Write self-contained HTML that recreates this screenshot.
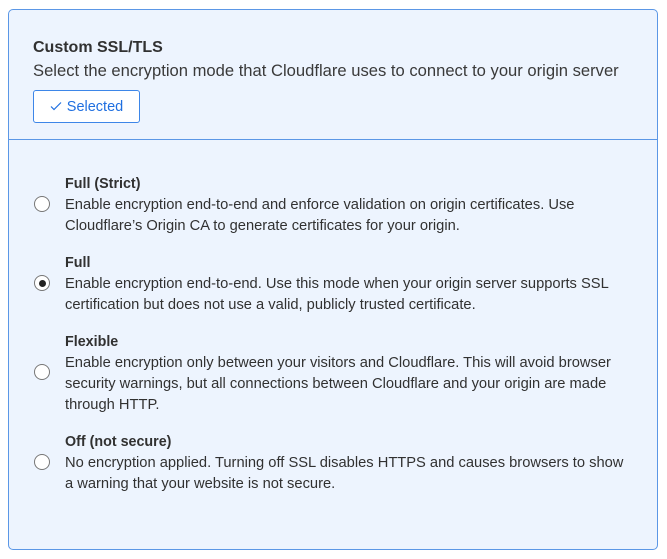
<!DOCTYPE html>
<html><head><style>
body{margin:0;width:667px;height:559px;background:#fff;font-family:"Liberation Sans",sans-serif;color:#313131;}
.panel{position:absolute;left:8px;top:9px;width:648px;height:539px;border:1px solid #5b97e6;border-radius:5px;background:#edf4fe;}
.div{position:absolute;left:0;right:0;top:129px;border-top:1px solid #5b97e6;}
.t{position:absolute;left:24px;top:29px;font-size:16px;font-weight:bold;}
.s{position:absolute;left:24px;top:51px;font-size:16.6px;color:#3a3a3a;}
.btn{position:absolute;left:24px;top:80px;width:105px;height:31px;border:1px solid #3d86e8;border-radius:3px;background:#fff;color:#1f6fe0;font-size:14.5px;line-height:33px;text-align:center;}
.opt{position:absolute;left:56px;font-size:14.7px;line-height:21px;width:565px;}
.opt b{display:block;font-size:14.3px;}
.r{position:absolute;left:25px;width:14px;height:14px;border:1px solid #777;border-radius:50%;background:#fff;}
.r.on::after{content:"";position:absolute;left:3.5px;top:3.5px;width:7px;height:7px;border-radius:50%;background:#222;}
</style></head><body>
<div class="panel">
<div class="t">Custom SSL/TLS</div>
<div class="s">Select the encryption mode that Cloudflare uses to connect to your origin server</div>
<div class="btn"><svg width="12" height="10" viewBox="0 0 12 10" style="margin-right:5px"><path d="M1 5.5L4 8.5L11 1.5" fill="none" stroke="#1f6fe0" stroke-width="1.2"/></svg>Selected</div>
<div class="div"></div>
<div class="opt" style="top:164px"><b>Full (Strict)</b>Enable encryption end-to-end and enforce validation on origin certificates. Use Cloudflare’s Origin CA to generate certificates for your origin.</div>
<div class="r" style="top:186px"></div>
<div class="opt" style="top:243px"><b>Full</b>Enable encryption end-to-end. Use this mode when your origin server supports SSL certification but does not use a valid, publicly trusted certificate.</div>
<div class="r on" style="top:265px"></div>
<div class="opt" style="top:322px"><b>Flexible</b>Enable encryption only between your visitors and Cloudflare. This will avoid browser security warnings, but all connections between Cloudflare and your origin are made through HTTP.</div>
<div class="r" style="top:354px"></div>
<div class="opt" style="top:422px"><b>Off (not secure)</b>No encryption applied. Turning off SSL disables HTTPS and causes browsers to show a warning that your website is not secure.</div>
<div class="r" style="top:444px"></div>
</div>
</body></html>
